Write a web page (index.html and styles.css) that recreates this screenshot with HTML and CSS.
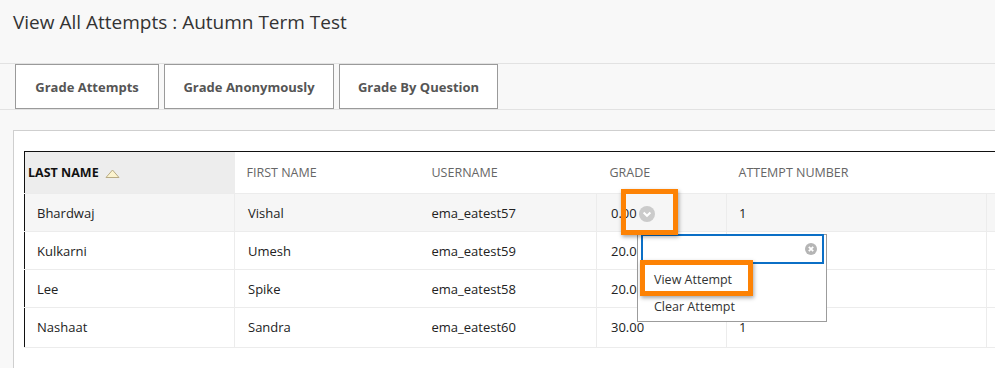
FILE: index.html
```html
<html>

<head>
  <meta name="viewport" content="width=device-width, initial-scale=1" />
  <link rel="stylesheet" href="styles.css">
  <title>View All Attempts</title>
</head>

<body>
  <h1 class="page-title">View All Attempts : Autumn Term Test</h1>

  <div class="toolbar">
    <button class="tool-btn btn-attempts">Grade Attempts</button>
    <button class="tool-btn btn-anon">Grade Anonymously</button>
    <button class="tool-btn btn-question">Grade By Question</button>
  </div>

  <div class="panel">
    <table class="attempts">
      <colgroup>
        <col class="col-last">
        <col class="col-first">
        <col class="col-user">
        <col class="col-grade">
        <col class="col-num">
        <col class="col-extra">
      </colgroup>
      <tr>
        <th class="sorted">LAST NAME
          <svg class="sort-icon" width="15" height="9" viewBox="0 0 15 9">
            <path d="M1 8.5 L7.5 1 L14 8.5 Z" fill="#fbf3cf" stroke="#b8ab85" stroke-width="1" />
          </svg>
        </th>
        <th>FIRST NAME</th>
        <th>USERNAME</th>
        <th class="th-grade">GRADE</th>
        <th>ATTEMPT NUMBER</th>
        <th></th>
      </tr>
      <tr class="hover">
        <td>Bhardwaj</td>
        <td>Vishal</td>
        <td class="no-line">ema_eatest57</td>
        <td class="grade-cell">
          0.00<span class="chevron">
            <svg width="16" height="16" viewBox="0 0 16 16">
              <circle cx="8" cy="8" r="8" fill="#cbcbcb" />
              <path d="M4.6 6.6 L8 9.8 L11.4 6.6" fill="none" stroke="#fff" stroke-width="2" />
            </svg>
          </span>
          <div class="mark mark-chevron"></div>
          <div class="menu">
            <div class="menu-search">
              <svg class="clear-icon" width="12" height="12" viewBox="0 0 12 12">
                <circle cx="6" cy="6" r="6" fill="#b5b5b5" />
                <path d="M3.8 3.8 L8.2 8.2 M8.2 3.8 L3.8 8.2" stroke="#fff" stroke-width="1.8" />
              </svg>
            </div>
            <div class="menu-item first">View Attempt</div>
            <div class="menu-item">Clear Attempt</div>
            <div class="mark mark-view"></div>
          </div>
        </td>
        <td>1</td>
        <td></td>
      </tr>
      <tr>
        <td>Kulkarni</td>
        <td>Umesh</td>
        <td class="no-line">ema_eatest59</td>
        <td class="grade-cell">20.00</td>
        <td>1</td>
        <td></td>
      </tr>
      <tr>
        <td>Lee</td>
        <td>Spike</td>
        <td class="no-line">ema_eatest58</td>
        <td class="grade-cell">20.00</td>
        <td>1</td>
        <td></td>
      </tr>
      <tr class="last">
        <td>Nashaat</td>
        <td>Sandra</td>
        <td class="no-line">ema_eatest60</td>
        <td class="grade-cell">30.00</td>
        <td>1</td>
        <td></td>
      </tr>
    </table>
  </div>
</body>

</html>
```

FILE: styles.css
```css
html,
body {
  overflow: hidden;
}

body {
  margin: 0;
  background-color: #f8f8f8;
  font-family: "Open Sans", sans-serif;
  color: #333;
}

.page-title {
  margin: 0;
  padding: 8px 0 0 13px;
  height: 63px;
  box-sizing: border-box;
  font-size: 19px;
  font-weight: normal;
  line-height: 28px;
  color: #333;
}

.toolbar {
  display: flex;
  gap: 5px;
  padding-left: 15px;
  border-top: 1px solid #e2e2e2;
  border-bottom: 1px solid #e2e2e2;
}

.tool-btn {
  height: 45px;
  padding: 0;
  background: #fff;
  border: 1px solid #9a9a9a;
  font-family: "Open Sans", sans-serif;
  font-size: 13px;
  font-weight: bold;
  color: #555;
  white-space: nowrap;
}

.btn-attempts {
  width: 144px;
}

.btn-anon {
  width: 170px;
}

.btn-question {
  width: 159px;
}

.panel {
  margin: 20px 0 0 13px;
  padding: 20px 0 20px 10px;
  background: #fff;
  border-top: 1px solid #cfcfcf;
  border-left: 1px solid #cfcfcf;
  height: 300px;
}

.attempts {
  border-collapse: collapse;
  table-layout: fixed;
  border: 1px solid #111;
  width: 1022px;
  font-size: 13px;
}

.col-last {
  width: 210px;
}

.col-first {
  width: 185px;
}

.col-user {
  width: 177px;
}

.col-grade {
  width: 130px;
}

.col-num {
  width: 260px;
}

.col-extra {
  width: 60px;
}

.attempts th {
  height: 42px;
  padding: 0 0 0 12px;
  text-align: left;
  font-weight: normal;
  font-size: 12.5px;
  color: #666;
  background: #fff;
  border-bottom: 1px solid #ececec;
  white-space: nowrap;
}

.attempts th.sorted {
  background: #ededed;
  color: #111;
  font-weight: bold;
  padding-left: 3px;
}

.attempts th.th-grade {
  padding-left: 13px;
}

.sort-icon {
  margin-left: 3px;
  vertical-align: -1px;
}

.attempts td {
  height: 38px;
  padding: 0 0 0 12px;
  border-bottom: 1px solid #ececec;
  border-left: 1px solid #ececec;
  color: #222;
  white-space: nowrap;
}

.attempts tr.last td {
  height: 40px;
  padding-bottom: 2px;
}

.attempts td:first-child,
.attempts td.no-line {
  border-left: none;
}

.attempts tr.hover td {
  background: #f6f6f6;
}

.attempts td:nth-child(2) {
  padding-left: 13px;
}

.attempts td.grade-cell {
  padding-left: 14px;
  position: relative;
}

.chevron {
  display: inline-block;
  margin-left: 2px;
  vertical-align: -4px;
  height: 16px;
}

.mark {
  position: absolute;
  border: 5px solid #fd8204;
  box-shadow: 1px 2px 4px rgba(0, 0, 0, 0.35);
  z-index: 3;
}

.mark-chevron {
  left: 24px;
  top: -5px;
  width: 47px;
  height: 36px;
}

.menu {
  position: absolute;
  left: 40px;
  top: 40px;
  width: 190px;
  height: 88px;
  background: #fff;
  border: 1px solid #9c9c9c;
  box-sizing: border-box;
  z-index: 2;
}

.menu-search {
  position: relative;
  margin: -1px 2px 0 3px;
  height: 30px;
  border: 2px solid #0b6fc6;
  box-sizing: border-box;
}

.clear-icon {
  position: absolute;
  right: 5px;
  top: 7px;
}

.menu-item {
  padding-left: 16px;
  height: 27px;
  line-height: 27px;
  font-size: 12.5px;
  color: #333;
}

.menu-item.first {
  margin-top: 2px;
}

.mark-view {
  left: 2px;
  top: 25px;
  width: 103px;
  height: 26px;
}
```
